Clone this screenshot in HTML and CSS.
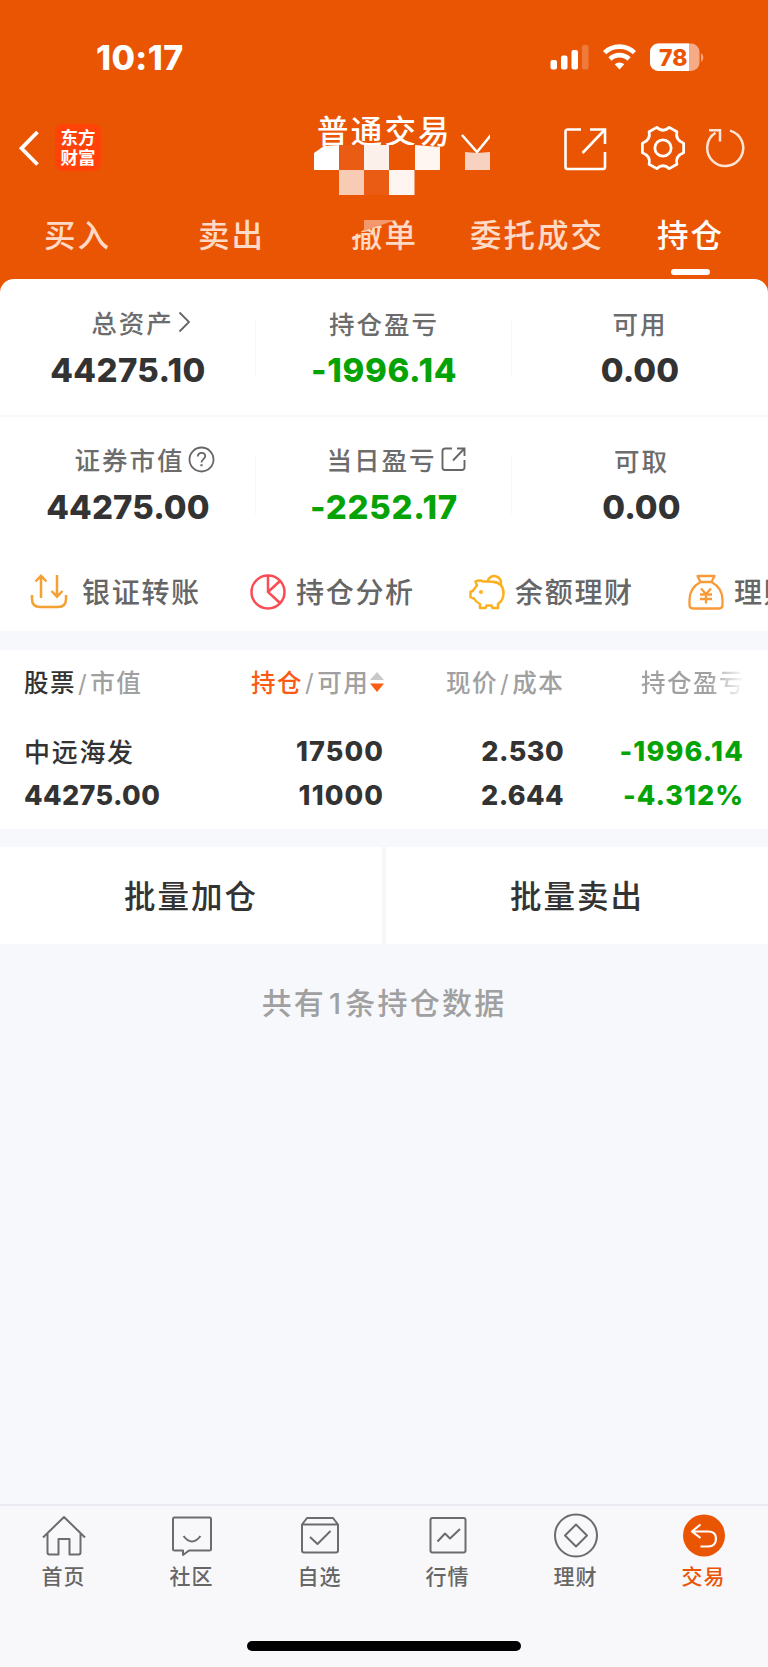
FILE: index.html
```html
<!DOCTYPE html>
<html lang="zh-CN">
<head>
<meta charset="utf-8">
<title>持仓</title>
<link rel="stylesheet" href="styles.css">
</head>
<body>
<div class="app">
  <header class="top">
    <div class="status">
      <span class="clock">10:17</span>
      <svg class="status-icons" width="160" height="32" viewBox="0 0 160 32">
        <g fill="#fff">
          <rect x="0.5" y="18" width="6.5" height="9.5" rx="2"/><rect x="11" y="13.500" width="6.500" height="14" rx="2"/><rect x="21.500" y="8" width="6.500" height="19.500" rx="2"/>
          <rect x="32" y="3" width="6.500" height="24.500" rx="2" opacity=".22"/>
          <path d="M69.500 27.500L64.700 22.300a7 7 0 0 1 9.600 0z"/>
        </g>
        <g fill="none" stroke="#fff" stroke-width="4.600">
          <path d="M54.600 10.600a21.500 21.500 0 0 1 29.800 0M60 17a13.500 13.500 0 0 1 19 0"/>
        </g>
        <rect x="100" y="1.500" width="49.500" height="27.500" rx="8.500" fill="#f5ab86"/>
        <path d="M108.500 1.500H139V29H108.500a8.500 8.500 0 0 1-8.500-8.500V10a8.500 8.500 0 0 1 8.500-8.500z" fill="#fff"/>
        <path d="M151 11.500c3 1 3 7 0 8z" fill="#f5ab86"/>
        <text class="battery" x="109" y="23.500">78</text>
      </svg>
    </div>
    <div class="nav">
      <svg class="back" width="22" height="38" viewBox="0 0 22 38"><path d="M20.500 3L4.500 19.300L20.500 35.500" fill="none" stroke="#fff" stroke-width="3.800"/></svg>
      <div class="logo"><span>东方</span><span>财富</span></div>
      <div class="account">
        <span class="account-name">普通交易</span>
        <svg class="mosaic" width="180" height="85" viewBox="0 0 180 85">
          <path d="M79 35h26v25H79z" fill="#ea5504"/><path d="M29 35h25v25H29z" fill="#ea5b14"/>
          <path d="M4 43l10-7l15-1v25H4z" fill="#fff"/><path d="M54 35h25v25H54z" fill="#fcf1ea"/><path d="M105 35l25 2v23h-25z" fill="#fff6f1"/>
          <path d="M29 60h25v25H29z" fill="#f8cbb4"/><path d="M54 60h25v25H54z" fill="#ea5b14"/><path d="M79 60h25.500v25H79z" fill="#fef5f0"/>
          <path d="M155 42l12 1 13-1v18h-25z" fill="#f8d2c0"/>
          <path d="M152 25l15 17 14-17" fill="none" stroke="#fff" stroke-width="2.600"/>
        </svg>
      </div>
      <svg class="share" width="44" height="44" viewBox="0 0 44 44" fill="none" stroke="#fff" stroke-width="2.600"><path d="M18 2.500H4.500a2 2 0 0 0-2 2V40a2 2 0 0 0 2 2H40a2 2 0 0 0 2-2V25M27 2.500H42V17M19.500 26L41.500 3"/></svg>
      <svg class="gear" width="46" height="46" viewBox="-1 -1 48 48" fill="none" stroke="#fff" stroke-width="2.900" stroke-linejoin="round"><circle cx="23" cy="23" r="8.500"/><path d="M16.500 1.500Q23 7.500 29.500 1.500L37.500 6Q35.500 14.500 44.500 18V28Q35.500 31.500 37.500 40L29.500 44.500Q23 38.500 16.500 44.500L8.500 40Q10.500 31.500 1.500 28V18Q10.500 14.500 8.500 6z"/></svg>
      <svg class="reload" width="42" height="42" viewBox="0 0 42 42" fill="none" stroke="#ffe5d8" stroke-width="2.500"><path d="M26 3.600A18 18 0 1 1 11.500 5.800M5 3.300H16V14.500"/></svg>
    </div>
    <nav class="tabs">
      <span class="tab t1">买入</span><span class="tab t2">卖出</span>
      <span class="tab t3">撤单<svg class="patch" width="48" height="18" viewBox="0 0 48 18"><path d="M-1 -3H34V2L13 10L0 17z" fill="#ea5504"/><path d="M13 0H46L36 3L13 11z" fill="#f2986c"/></svg></span>
      <span class="tab t4">委托成交</span><span class="tab t5 on">持仓</span>
    </nav>
  </header>

  <main>
    <section class="card">
      <div class="stats first">
        <div class="stat s1"><div class="label l1">总资产<svg width="13" height="22" viewBox="0 0 13 22"><path d="M1.500 1.500L11 11L1.500 20.500" fill="none" stroke="#666" stroke-width="1.800"/></svg></div><b>44275.10</b></div>
        <div class="stat s2"><div class="label l2">持仓盈亏</div><b class="down">-1996.14</b></div>
        <div class="stat s3"><div class="label l3">可用</div><b>0.00</b></div>
      </div>
      <div class="stats second">
        <div class="stat s1"><div class="label l4">证券市值<svg width="27" height="27" viewBox="0 0 27 27" fill="none" stroke="#666" stroke-width="1.800"><circle cx="13.500" cy="13.500" r="12"/><path d="M9.800 10.500c0-5 7.400-4.600 7.400-.3 0 3-3.700 3-3.700 6.300"/><path d="M13.500 18.300v2" stroke-width="2.200"/></svg></div><b>44275.00</b></div>
        <div class="stat s2"><div class="label l5">当日盈亏<svg width="25" height="25" viewBox="0 0 25 25" fill="none" stroke="#666" stroke-width="1.900"><path d="M11 1.500H4a2.500 2.500 0 0 0-2.500 2.500V20.500a2.500 2.500 0 0 0 2.500 2.500H21a2.500 2.500 0 0 0 2.500-2.500V13M16 1.500H23.500V9M12 13.500L23 2"/></svg></div><b class="down">-2252.17</b></div>
        <div class="stat s3 shift"><div class="label l6">可取</div><b>0.00</b></div>
      </div>
      <div class="quick">
        <div class="q q1"><svg width="38" height="38" viewBox="0 0 38 38" fill="none" stroke="#f5a033" stroke-width="2.500"><path d="M2 22v4q0 8 8 8H28q8 0 8-8V22M11 25V3M5.500 8.500L11 2.800L16.500 8.500M27 2V23.500M21.500 18L27 23.700L32.500 18"/></svg><span>银证转账</span></div>
        <div class="q q2"><svg width="38" height="38" viewBox="0 0 38 38" fill="none" stroke="#fb4b54" stroke-width="2.500"><circle cx="19" cy="19" r="16.500"/><path d="M19 2.500V19L31 30M19 19L31 8"/></svg><span>持仓分析</span></div>
        <div class="q q3"><svg width="38" height="38" viewBox="0 0 38 38" fill="none" stroke="#fbb01f" stroke-width="2.500" stroke-linejoin="round"><path d="M19.500 8.600H15.500Q12 6.500 7.500 8.500L9 12.500Q6 16 4.800 18L2.500 18.800V24L6 25.500Q8 29 12 31V35H17.500L18.500 32.500H23.500L24.500 35H30V31Q35.500 27 35.500 20.500Q35.500 9.500 24.500 8.800z"/><path d="M19.500 8.500a6.800 6.800 0 1 1 13.500 3"/><circle cx="13" cy="19" r=".8" fill="#fbb01f"/></svg><span>余额理财</span></div>
        <div class="q q4"><svg width="38" height="38" viewBox="0 0 38 38" fill="none" stroke="#f99a38" stroke-width="2.300" stroke-linejoin="round"><path d="M10.500 3H27.500L24.500 9H13.500zM13.500 9Q2.500 15 2.500 27V32Q2.500 35.500 6 35.500H32Q35.500 35.500 35.500 32V27Q35.500 15 24.500 9M14 15.500L19 21L24 15.500M19 21V30.500M13 21.500H25M13 26H25"/></svg><span>理财</span></div>
      </div>
    </section>

    <section class="holdings">
      <div class="thead">
        <span class="h1"><strong>股票</strong><i>/</i>市值</span>
        <span class="h2"><strong class="hot">持仓</strong><i>/</i>可用<svg width="16" height="24" viewBox="0 0 16 24"><path d="M1 10L8 2L15 10z" fill="#c8c8c8"/><path d="M1 13.500H15L8 22z" fill="#fb5a12"/></svg></span>
        <span class="h3">现价<i>/</i>成本</span>
        <span class="h4">持仓盈亏</span>
      </div>
      <div class="row">
        <span class="c1 name">中远海发</span><span class="c2">17500</span><span class="c3">2.530</span><span class="c4 down">-1996.14</span>
      </div>
      <div class="row">
        <span class="c1">44275.00</span><span class="c2">11000</span><span class="c3">2.644</span><span class="c4 pct down">-4.312%</span>
      </div>
    </section>

    <div class="batch"><div>批量加仓</div><div>批量卖出</div></div>
    <p class="count">共有<em>1</em>条持仓数据</p>
  </main>

  <footer class="bar">
    <div class="items">
      <div class="item"><svg width="46" height="46" viewBox="0 0 46 46"><path d="M2 24.500L23 4L44 24.500M6.500 20.500V39.500Q6.500 41.500 8.500 41.500H17.500V26H28.500V41.500H37.500Q39.500 41.500 39.500 39.500V20.500"/></svg><span>首页</span></div>
      <div class="item"><svg width="46" height="46" viewBox="0 0 46 46"><path d="M5.500 4.500H40.500Q42 4.500 42 6V36Q42 37.500 40.500 37.500H20L14 42V37.500H5.500Q4 37.500 4 36V6Q4 4.500 5.500 4.500zM14.500 23Q23 34 31.500 23"/></svg><span>社区</span></div>
      <div class="item"><svg width="46" height="46" viewBox="0 0 46 46"><path d="M5 11.500L10 5H36L41 11.500V37.500Q41 39.500 39 39.500H7Q5 39.500 5 37.500zM5 11.500H41M13 24L20.500 31L33.500 18"/></svg><span>自选</span></div>
      <div class="item"><svg width="46" height="46" viewBox="0 0 46 46"><rect x="5.500" y="5" width="35" height="34.500" rx="2"/><path d="M12.500 28.500L20 20.500L25 25.500L35 16"/></svg><span>行情</span></div>
      <div class="item"><svg width="46" height="46" viewBox="0 0 46 46"><circle cx="23" cy="22.500" r="21"/><path d="M23 11.500L34 22.500L23 33.500L12 22.500z"/></svg><span>理财</span></div>
      <div class="item active"><svg width="46" height="46" viewBox="0 0 46 46"><circle class="disc" cx="23" cy="22.500" r="21"/><path d="M19.500 11.500L11 18.500L19.500 25M11.500 18.500H27Q35 18.500 35 25.500Q35 33.500 27 33.500H19.500"/></svg><span>交易</span></div>
    </div>
    <div class="home"></div>
  </footer>
</div>
</body>
</html>
```

FILE: styles.css
```css
* { box-sizing: border-box; }
body { margin: 0; background: #f7f8fb; font-family: "Noto Sans CJK SC", sans-serif; color: #333; }
.app { width: 768px; height: 1667px; display: flex; flex-direction: column; overflow: hidden; }

/* orange header */
.top { height: 300px; flex: none; background: #ea5504; color: #fff; }
.status { height: 104px; padding: 42px 0 0 96px; display: flex; }
.clock { width: 454px; font: 800 34px/31px Inter, sans-serif; letter-spacing: 0.4px; }
.battery { font: 800 23px Inter, sans-serif; fill: #ea5504; }
.nav { height: 106px; display: flex; align-items: flex-start; }
.back { margin: 25px 0 0 17px; }
.logo { width: 46px; height: 47px; margin: 20px 0 0 16px; padding-top: 3px; border-radius: 8px; background: #ff4208; display: flex; flex-direction: column; align-items: center; font: 700 17.500px/20px "Noto Sans CJK SC", sans-serif; }
.account { position: relative; width: 180px; height: 84px; margin: 6px 0 0 209px; }
.account-name { display: block; padding-left: 7px; line-height: 38px; font-size: 31.500px; font-weight: 500; letter-spacing: 2.200px; }
.mosaic { position: absolute; left: 0; top: 0; }
.share { margin: 23px 0 0 73px; }
.gear { margin: 21px 0 0 33px; }
.reload { margin: 23px 0 0 18px; }
.tabs { position: relative; height: 66px; display: flex; }
.tab { line-height: 46px; font-size: 31.500px; font-weight: 500; letter-spacing: 2px; color: #ffdac6; white-space: nowrap; }
.t1 { width: 154px; padding-left: 44px; }
.t2 { width: 153px; padding-left: 44px; }
.t3 { position: relative; width: 163px; padding-left: 44px; }
.patch { position: absolute; left: 44px; top: 10px; overflow: visible; }
.t4 { width: 187px; }
.t5 { position: relative; color: #fff; }
.t5::after { content: ""; position: absolute; left: 14px; top: 59px; width: 39px; height: 6px; border-radius: 3px; background: #fff; }

/* account summary */
.card { height: 352px; margin-top: -21px; position: relative; background: #fff; border-radius: 14px 14px 0 0; overflow: hidden; }
.stats { display: flex; height: 137px; }
.first { border-bottom: 2px solid #f8f8fa; height: 138px; }
.stat { width: 256px; display: flex; flex-direction: column; align-items: center; background: linear-gradient(#f9f9fa, #f9f9fa) no-repeat 255px 39px / 2px 60px; }
.second .stat { background-position-y: 38px; }
.s3, .second .s3 { background: none; }
.shift { padding-left: 3px; }
.label { height: 36px; margin-top: 25px; display: flex; align-items: center; font-size: 25.500px; font-weight: 500; letter-spacing: 2px; color: #6c6c6c; line-height: 36px; white-space: nowrap; }
.first .label { margin: 26px 0 -1px; }
.stat b { margin-top: 10px; font: 800 33px/40px Inter, sans-serif; color: #333; letter-spacing: 0.100px; }
.second b { margin-top: 9px; }
.first .s1 b { letter-spacing: .4px; }
.stat .down, .down { color: #05a305; }
.stat .down { letter-spacing: .7px; }
.l1, .l4, .l5 { position: relative; top: -1px; }
.l1 svg { margin-left: 4px; }
.l4 svg { margin-left: 3px; }
.l5 svg { margin-left: 4px; }
.l1 { padding-left: 26px; }
.l4 { padding-left: 33px; }
.l5 { padding-left: 24px; }

.quick { width: 900px; height: 75px; display: flex; }
.q { width: 219px; flex: none; display: flex; align-items: center; font-size: 28px; font-weight: 500; letter-spacing: 1.700px; color: #666; white-space: nowrap; }
.q1 { margin-left: 30px; }
.q span { margin-left: 9px; line-height: 36px; padding-bottom: 2px; }
.q1 span { margin-left: 14px; }

/* holdings table */
.holdings { height: 179px; margin-top: 19px; background: #fff; padding-top: 12px; }
.thead { height: 40px; margin-bottom: 28px; display: flex; line-height: 40px; font-size: 24.500px; font-weight: 500; letter-spacing: 1.500px; color: #a0a0a0; white-space: nowrap; }
.thead strong { font-weight: 500; color: #333; }
.thead .hot { color: #fb5a12; }
.thead i { font: 400 24px Inter, sans-serif; margin: 0 2px; }
.h1 { width: 251px; padding-left: 24px; }
.h2 { width: 195px; display: flex; align-items: center; }
.h3 { width: 195px; }
.h4 { width: 104px; color: transparent; background: linear-gradient(90deg, #a0a0a0 65%, #fff 100%); background-clip: text; -webkit-background-clip: text; }
.row { height: 44px; display: grid; grid-template-columns: 200px 184px 180px 180px; font: 800 27px/44px Inter, sans-serif; letter-spacing: .4px; }
.c1 { padding-left: 24px; }
.name { font: 500 26px/42px "Noto Sans CJK SC", sans-serif; letter-spacing: 1.700px; }
.c2, .c3, .c4 { text-align: right; }
.c2, .c4 { letter-spacing: 1.200px; }
.c2 { letter-spacing: 1.100px; }
.pct { letter-spacing: 1px; }

.batch { margin-top: 18px; height: 97px; display: flex; gap: 4px; }
.batch div { flex: 1; background: #fff; text-align: center; line-height: 94px; font-size: 31.500px; font-weight: 500; letter-spacing: 2px; }
.count { margin: 37px 0 0; text-align: center; font-size: 30px; font-weight: 500; line-height: 40px; letter-spacing: 2.200px; color: #a0a0a0; }
.count em { font: 500 29px Inter, sans-serif; margin: 0 2px 0 3px; }

/* bottom navigation */
.bar { margin-top: auto; height: 163px; flex: none; border-top: 2px solid #e9ebf0; background: #f8f8fb; }
.items { display: flex; height: 135px; }
.item { width: 128px; padding-top: 7px; display: flex; flex-direction: column; align-items: center; font-size: 21px; line-height: 28px; font-weight: 500; letter-spacing: 1px; color: #666; }
.item span { margin-top: 2px; padding-right: 1px; }
.item svg { fill: none; stroke: #6c6c6c; stroke-width: 2; stroke-linejoin: round; }
.active { color: #ea5504; }
.active svg { stroke: #fff; stroke-width: 2.200; }
.active .disc { fill: #ea5504; stroke: none; }
.home { width: 274px; height: 10px; margin: 0 auto; border-radius: 5px; background: #000; }
```
